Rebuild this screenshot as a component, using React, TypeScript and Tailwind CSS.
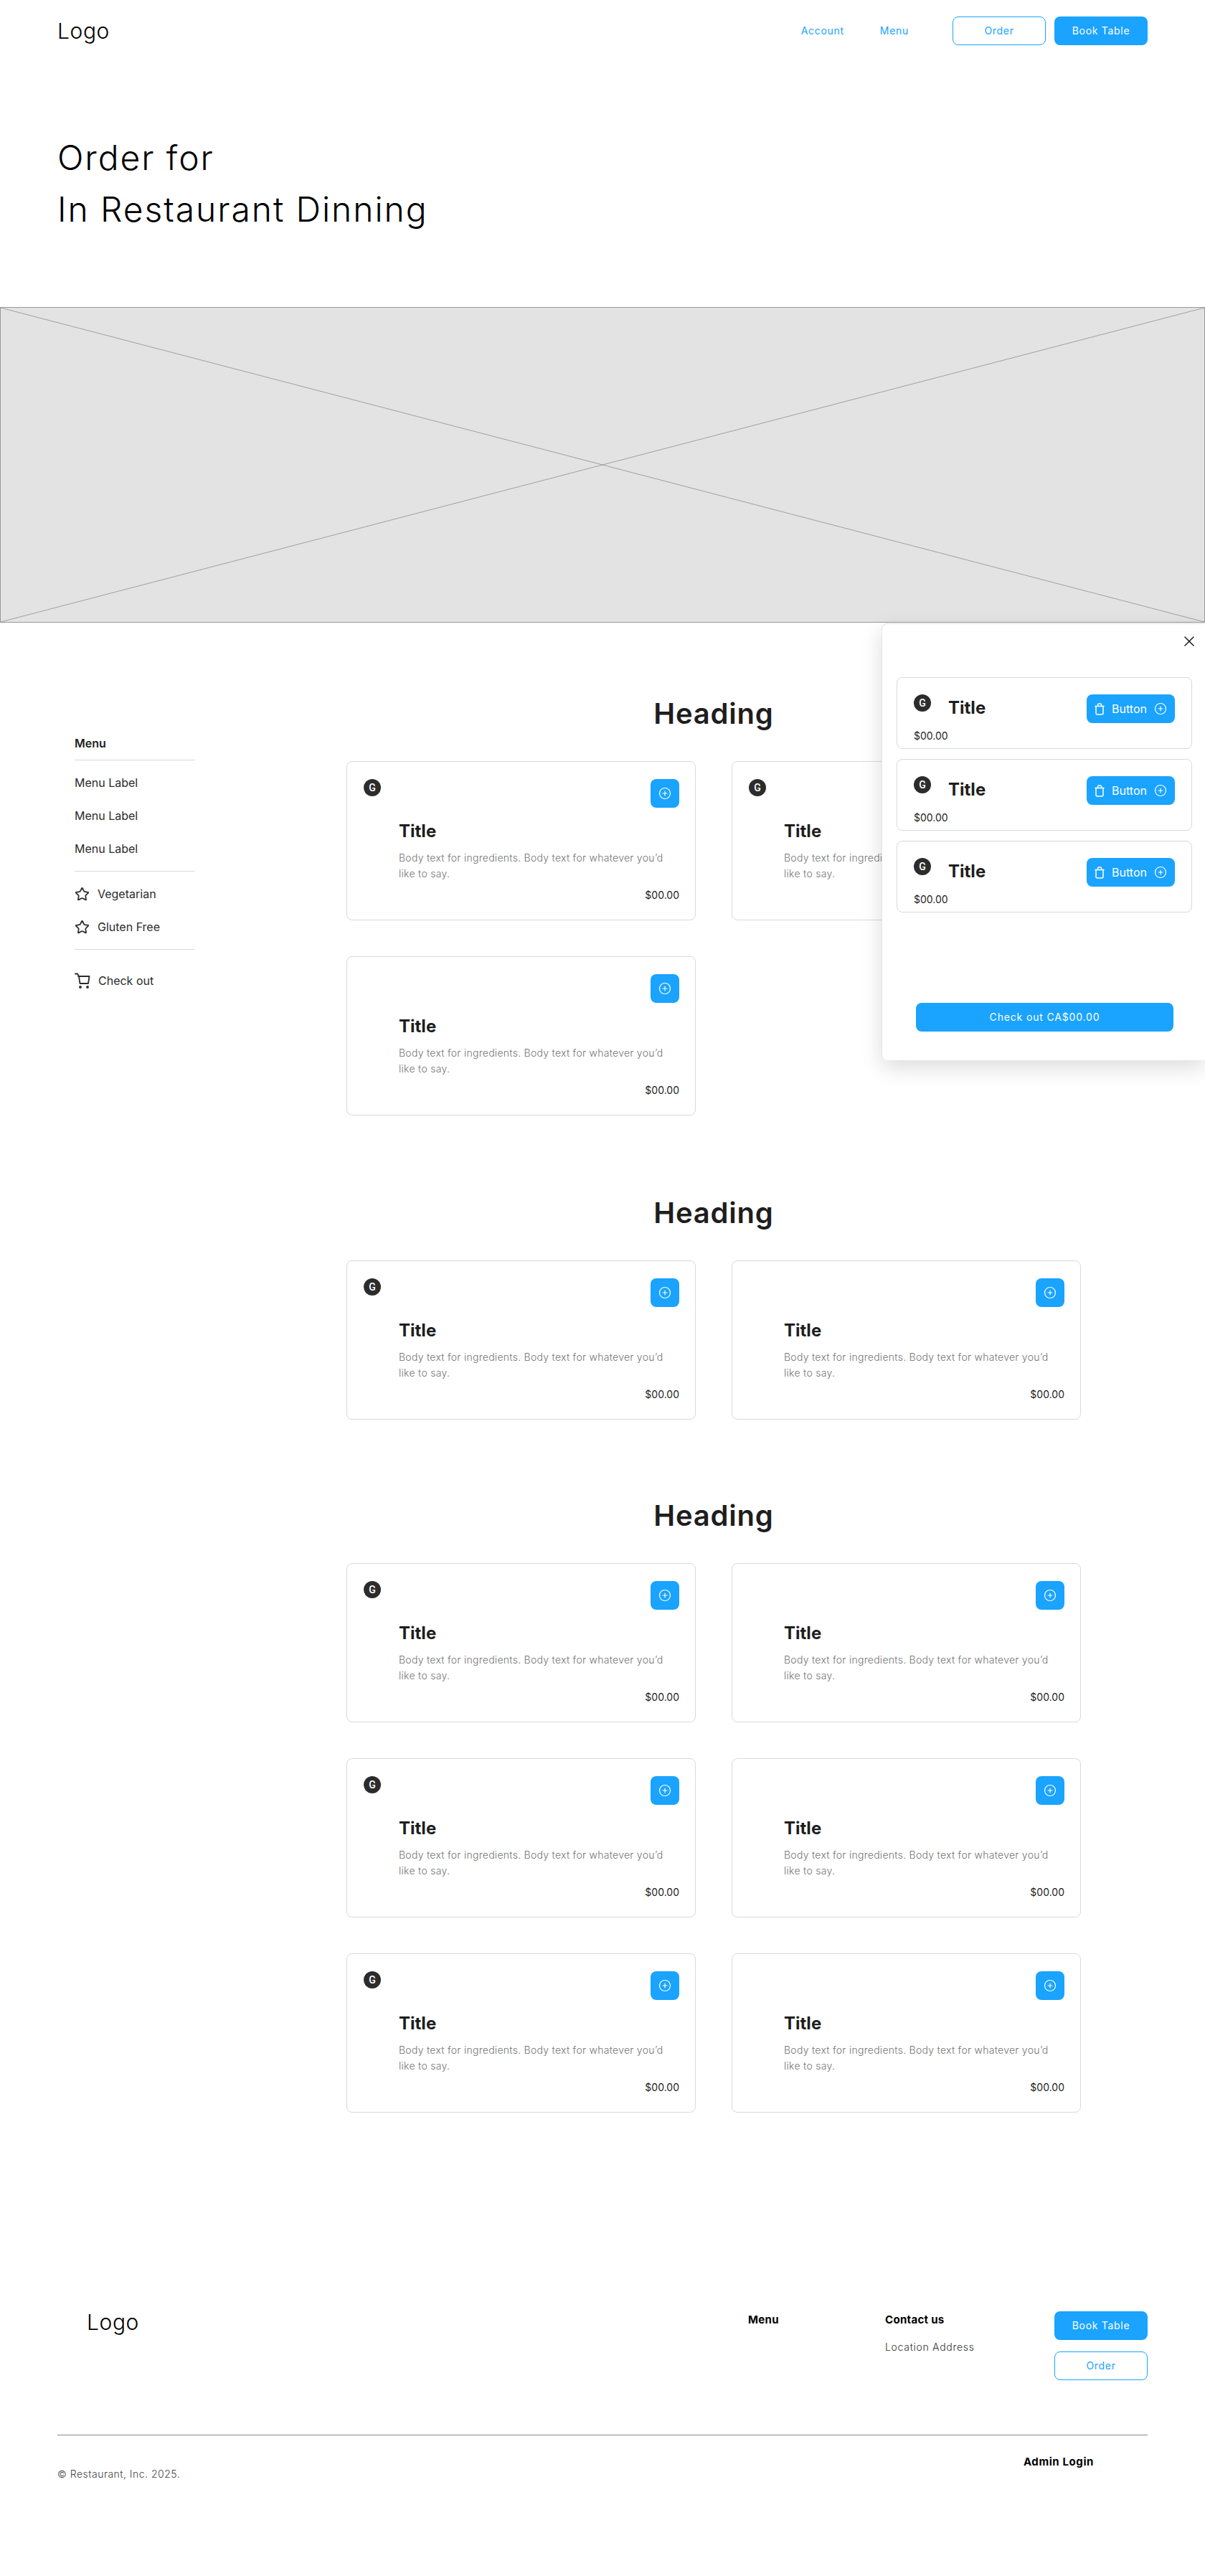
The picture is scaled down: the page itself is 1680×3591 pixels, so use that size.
import React from 'react';
import { CirclePlus, Star, X } from 'lucide-react';

const mont = "font-['Inter',sans-serif]";

const Bag: React.FC = () => (
  <svg width="14" height="17" viewBox="0 0 14 17" fill="none" stroke="currentColor" strokeWidth="1.5" strokeLinecap="round" strokeLinejoin="round">
    <path d="M1 4.5h12M2 4.5v9.5a2 2 0 0 0 2 2h6a2 2 0 0 0 2-2V4.5M4.5 4.5V2.5a1.5 1.5 0 0 1 1.5-1.5h2a1.5 1.5 0 0 1 1.5 1.5v2" />
  </svg>
);

const Cart: React.FC = () => (
  <svg width="22" height="22" viewBox="0 0 22 22" fill="none" stroke="#2c2c2c" strokeWidth="1.8" strokeLinecap="round" strokeLinejoin="round">
    <path d="M1 1.5h3l2 3.5 1.5 10h11.5l1.5-10H5" />
    <circle cx="8" cy="20" r="1" fill="#2c2c2c" />
    <circle cx="18" cy="20" r="1" fill="#2c2c2c" />
  </svg>
);

const Badge: React.FC = () => (
  <div className="w-6 h-6 rounded-full bg-[#2c2c2c] flex items-center justify-center shrink-0 text-white text-sm font-medium font-['Roboto',sans-serif]">
    G
  </div>
);

const Outline: React.FC<{ label: string }> = ({ label }) => (
  <button className={`w-[130px] h-10 rounded-lg border border-[#1aa3ff] bg-white text-[#1aa3ff] text-sm tracking-[0.05em] ${mont}`}>
    {label}
  </button>
);

const Solid: React.FC<{ label: string }> = ({ label }) => (
  <button className={`w-[130px] h-10 rounded-lg bg-[#1aa3ff] text-white text-sm tracking-[0.05em] ${mont}`}>
    {label}
  </button>
);

const Card: React.FC<{ badge?: boolean }> = ({ badge }) => (
  <div className="w-[487px] h-[222px] rounded-lg border border-[#d9d9d9] bg-white pl-[23px] pr-[22px] pt-6 flex flex-col">
    <div className="flex justify-between items-start h-10">
      {badge ? <Badge /> : <div />}
      <button className="w-10 h-10 rounded-lg bg-[#1aa3ff] text-white flex items-center justify-center">
        <CirclePlus size={18} strokeWidth={1.6} />
      </button>
    </div>
    <div className="pl-[49px] mt-[17px]">
      <h3 className={`text-2xl leading-8 font-bold text-[#1e1e1e] ${mont}`}>Title</h3>
      <p className={`mt-[10px] text-sm leading-[22px] font-light text-[#757575] tracking-[0.02em] ${mont}`}>
        Body text for ingredients. Body text for whatever you’d like to say.
      </p>
      <p className={`mt-[9px] text-sm leading-5 text-right text-[#1e1e1e] ${mont}`}>$00.00</p>
    </div>
  </div>
);

const CartItem: React.FC = () => (
  <div className="h-[100px] rounded-lg border border-[#d9d9d9] bg-white px-[23px] pt-[23px]">
    <div className="flex items-start h-10">
      <Badge />
      <h3 className={`ml-6 text-2xl leading-[38px] font-bold text-[#1e1e1e] ${mont}`}>Title</h3>
      <button className="ml-auto w-[123px] h-10 rounded-lg bg-[#1aa3ff] text-white flex items-center justify-center gap-[10px] text-base font-['Inter',sans-serif]">
        <Bag />
        Button
        <CirclePlus size={18} strokeWidth={1.6} />
      </button>
    </div>
    <p className={`text-sm leading-5 text-[#1e1e1e] mt-2 ${mont}`}>$00.00</p>
  </div>
);

const Heading: React.FC = () => (
  <h2 className={`text-center text-[40px] leading-[48px] font-semibold text-[#1e1e1e] tracking-[0.02em] mb-[42px] ${mont}`}>Heading</h2>
);

const Grid: React.FC<{ rows: number }> = ({ rows }) => (
  <div className="grid grid-cols-2 gap-x-[50px] gap-y-[50px]">
    {Array.from({ length: rows * 2 }).map((_, i) => (
      <Card key={i} badge={i % 2 === 0} />
    ))}
  </div>
);

const SideLabel: React.FC<{ children: React.ReactNode }> = ({ children }) => (
  <div className="h-[46px] flex items-center text-base text-[#2c2c2c] font-['Inter',sans-serif]">{children}</div>
);

export default function App() {
  return (
    <div className="relative w-[1680px] min-h-[3591px] bg-white overflow-hidden">
      {/* Header */}
      <header className="flex items-center justify-between px-20 pt-[23px]">
        <div className={`text-[30px] leading-10 font-light text-black tracking-[0.02em] ${mont}`}>Logo</div>
        <nav className="flex items-center">
          <a className={`text-sm text-[#1aa3ff] tracking-[0.05em] mr-[50px] ${mont}`}>Account</a>
          <a className={`text-sm text-[#1aa3ff] tracking-[0.05em] mr-[61px] ${mont}`}>Menu</a>
          <div className="flex gap-3">
            <Outline label="Order" />
            <Solid label="Book Table" />
          </div>
        </nav>
      </header>

      {/* Hero */}
      <div className="px-20 pt-[121px] pb-[100px]">
        <h1 className={`text-[48px] leading-[72px] font-light text-black tracking-[0.04em] ${mont}`}>
          Order for
          <br />
          In Restaurant Dinning
        </h1>
      </div>

      {/* Placeholder image */}
      <div className="h-[440px] bg-[#e3e3e3] border border-[#999999]">
        <svg width="100%" height="100%" preserveAspectRatio="none" viewBox="0 0 1678 438">
          <path d="M0 0L1678 438M1678 0L0 438" stroke="#a0a0a0" strokeWidth="1" />
        </svg>
      </div>

      <main className="flex">
        {/* Sidebar */}
        <aside className="w-[168px] ml-[104px] pt-[156px] shrink-0">
          <div className="text-base leading-6 font-semibold text-[#1e1e1e] pb-[11px] border-b border-[#d9d9d9] font-['Inter',sans-serif]">Menu</div>
          <div className="py-2 border-b border-[#d9d9d9]">
            <SideLabel>Menu Label</SideLabel>
            <SideLabel>Menu Label</SideLabel>
            <SideLabel>Menu Label</SideLabel>
          </div>
          <div className="py-2 border-b border-[#d9d9d9]">
            <SideLabel>
              <Star size={21} strokeWidth={2} className="mr-[11px]" />
              Vegetarian
            </SideLabel>
            <SideLabel>
              <Star size={21} strokeWidth={2} className="mr-[11px]" />
              Gluten Free
            </SideLabel>
          </div>
          <div className="pt-5">
            <SideLabel>
              <Cart />
              <span className="ml-[11px]">Check out</span>
            </SideLabel>
          </div>
        </aside>

        {/* Menu sections */}
        <div className="w-[1024px] ml-[211px] pt-[103px]">
          <section>
            <Heading />
            <div className="grid grid-cols-2 gap-x-[50px] gap-y-[50px]">
              <Card badge />
              <Card badge />
              <Card />
            </div>
          </section>
          <section className="mt-[112px]">
            <Heading />
            <Grid rows={1} />
          </section>
          <section className="mt-[110px]">
            <Heading />
            <Grid rows={3} />
          </section>
        </div>
      </main>

      {/* Footer */}
      <footer className="px-20 pt-[277px]">
        <div className="flex items-start">
          <div className={`w-[963px] pl-[41px] text-[30px] leading-[30px] font-light text-black tracking-[0.02em] ${mont}`}>Logo</div>
          <div className={`w-[191px] text-[15px] leading-6 font-bold text-black tracking-[0.02em] ${mont}`}>Menu</div>
          <div className={`w-[236px] leading-6 ${mont}`}>
            <div className="text-[15px] font-bold text-black tracking-[0.02em]">Contact us</div>
            <div className="mt-4 text-sm font-light text-[#333333] tracking-[0.05em]">Location Address</div>
          </div>
          <div className="flex flex-col gap-4">
            <Solid label="Book Table" />
            <Outline label="Order" />
          </div>
        </div>
        <div className="mt-[76px] border-t border-[#888888]" />
        <div className="flex justify-between items-start">
          <div className={`pt-[44px] text-sm leading-5 font-light text-[#444444] tracking-[0.035em] ${mont}`}>© Restaurant, Inc. 2025.</div>
          <div className={`pt-[25px] pr-[75px] text-[15px] leading-6 font-bold text-black tracking-[0.04em] ${mont}`}>Admin Login</div>
        </div>
      </footer>

      {/* Order drawer */}
      <div className="absolute left-[1229px] top-[869px] w-[451px] h-[609px] bg-white rounded-l-lg border-l border-t border-[#e5e5e5] shadow-[0_10px_30px_rgba(0,0,0,0.14)] flex flex-col">
        <div className="flex justify-end pt-3 pr-[10px] h-[74px]">
          <X size={24} strokeWidth={1.5} className="text-[#1e1e1e]" />
        </div>
        <div className="ml-[20px] w-[412px] flex flex-col gap-[14px]">
          <CartItem />
          <CartItem />
          <CartItem />
        </div>
        <button className={`mt-[126px] ml-[47px] w-[359px] h-10 rounded-lg bg-[#1aa3ff] text-white text-sm tracking-[0.06em] ${mont}`}>
          Check out CA$00.00
        </button>
      </div>
    </div>
  );
}
